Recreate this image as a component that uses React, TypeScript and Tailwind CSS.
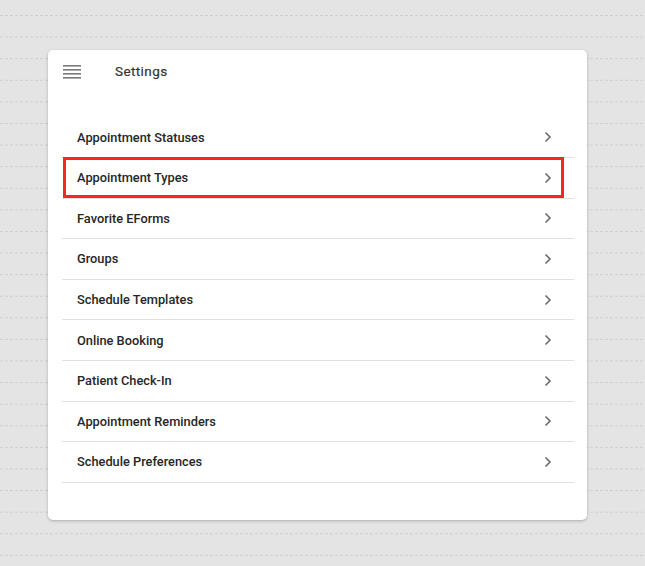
const items = [
  'Appointment Statuses',
  'Appointment Types',
  'Favorite EForms',
  'Groups',
  'Schedule Templates',
  'Online Booking',
  'Patient Check-In',
  'Appointment Reminders',
  'Schedule Preferences',
];

function Chevron() {
  return (
    <svg width="8" height="12" viewBox="0 0 8 12" fill="none" className="shrink-0">
      <path d="M1.5 1.5 L6 6 L1.5 10.5" stroke="#6b6b6b" strokeWidth="1.6" />
    </svg>
  );
}

function Hamburger() {
  return (
    <svg width="18" height="14" viewBox="0 0 18 14" className="shrink-0">
      <rect x="0" y="0" width="18" height="1.6" fill="#7a7a7a" />
      <rect x="0" y="4" width="18" height="1.6" fill="#7a7a7a" />
      <rect x="0" y="8" width="18" height="1.6" fill="#7a7a7a" />
      <rect x="0" y="12" width="18" height="1.6" fill="#7a7a7a" />
    </svg>
  );
}

export default function App() {
  return (
    <div className="min-h-[566px] w-full bg-[#e4e4e4] bg-[image:conic-gradient(at_3px_1px,transparent_75%,#cfcfcf_0)] bg-[size:5px_21.6px] bg-[position:0_15px] pt-[50px] pl-[48px] font-['Roboto',sans-serif]">
      <div className="relative w-[539px] h-[470px] pt-[15px] bg-white rounded-[5px] shadow-[0_1px_3px_rgba(0,0,0,0.25)]">
        <div className="flex items-center h-[14px] ml-[15px]">
          <Hamburger />
          <span className="ml-[34px] text-[13.5px] leading-none text-[#333] tracking-[0.4px] [-webkit-text-stroke:0.2px_#333]">Settings</span>
        </div>

        <ul className="mt-[38.5px] mx-[14px] w-[512px]">
          {items.map((label) => (
            <li
              key={label}
              className="flex items-center justify-between h-[40.6px] pl-[15px] pr-[22px] border-b border-[#e0e0e0]"
            >
              <span className="text-[12.8px] font-medium text-[#262626]">{label}</span>
              <Chevron />
            </li>
          ))}
        </ul>

        {/* highlight annotation */}
        <div className="absolute left-[15px] top-[107px] w-[501px] h-[41px] border-[3px] border-[#f2291c] pointer-events-none" />
      </div>
    </div>
  );
}
